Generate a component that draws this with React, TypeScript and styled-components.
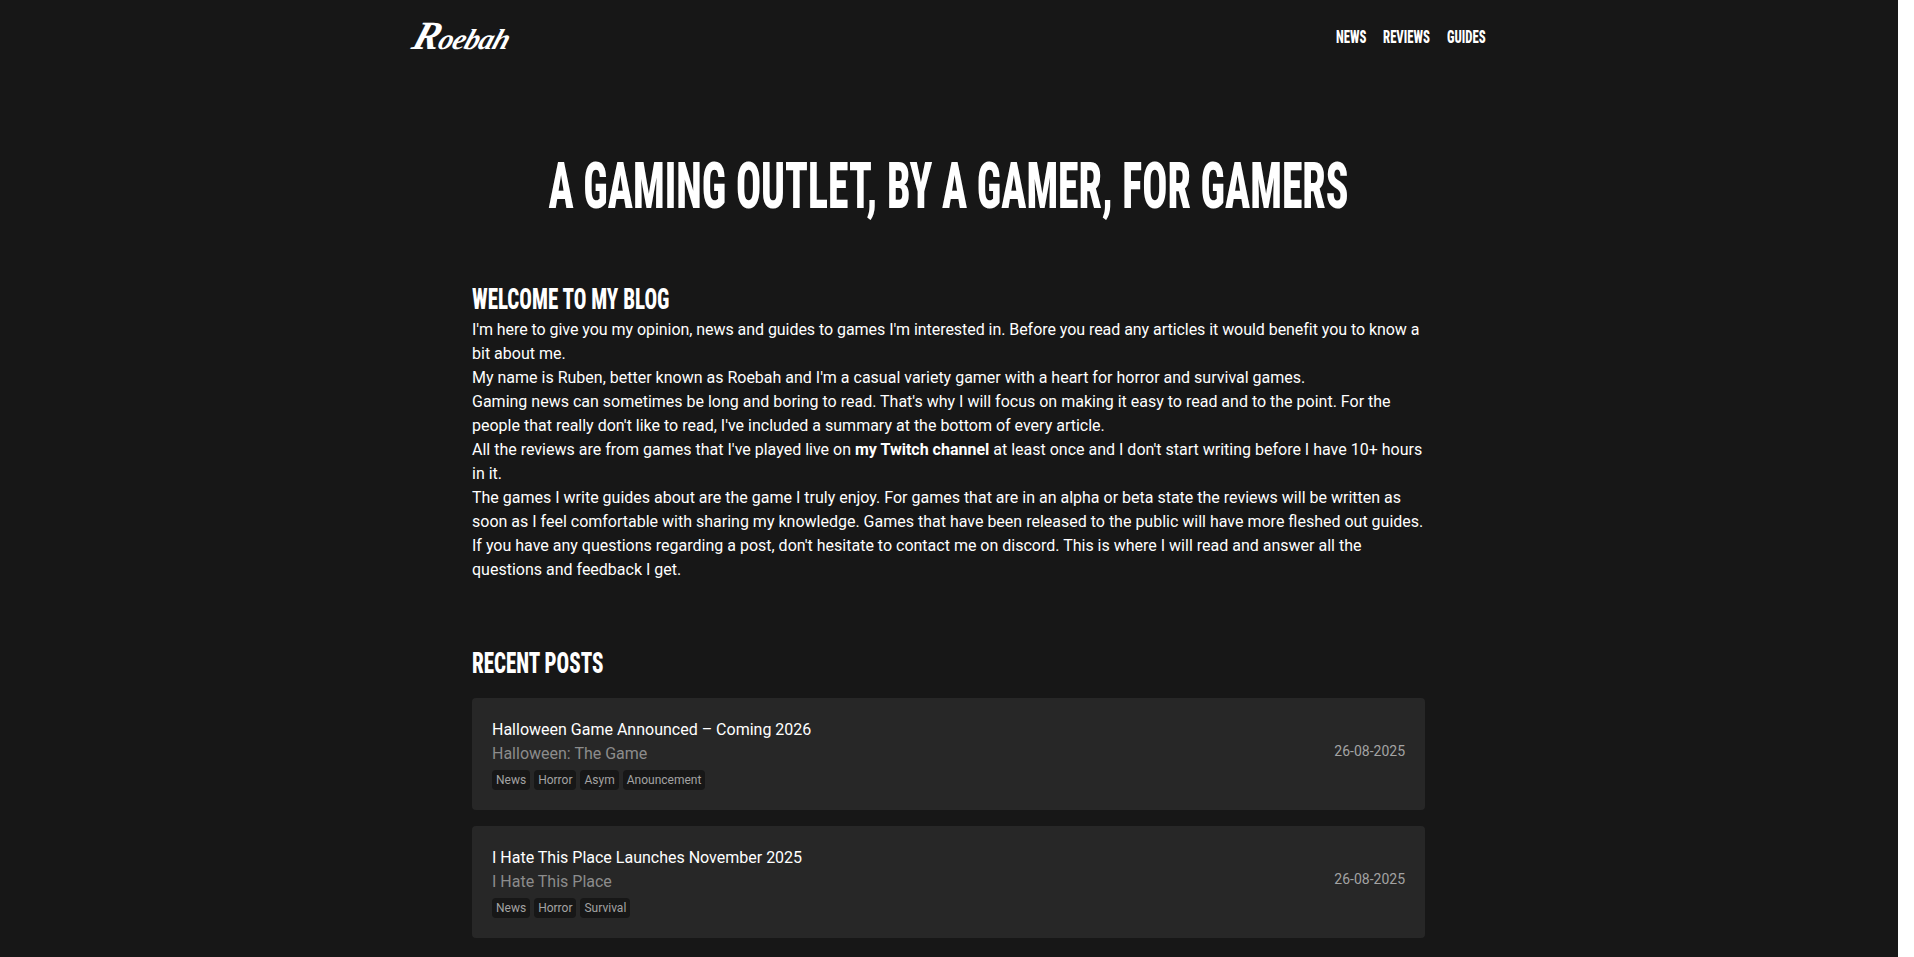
import React from "react";
import styled, { createGlobalStyle, css } from "styled-components";

const posts = [
  {
    title: "Halloween Game Announced – Coming 2026",
    game: "Halloween: The Game",
    tags: ["News", "Horror", "Asym", "Anouncement"],
    date: "26-08-2025",
  },
  {
    title: "I Hate This Place Launches November 2025",
    game: "I Hate This Place",
    tags: ["News", "Horror", "Survival"],
    date: "26-08-2025",
  },
];

const navLinks = [
  { label: "NEWS", width: 31 },
  { label: "REVIEWS", width: 48 },
  { label: "GUIDES", width: 39 },
];

// no Bebas Neue here, so squeeze Roboto's narrowest width down to the same proportions
const displayFont = css`
  font-family: Roboto, "Liberation Sans", sans-serif;
  font-stretch: 75%;
  font-weight: 800;
  white-space: nowrap;
  transform-origin: left center;
`;

const GlobalStyle = createGlobalStyle`
  html, body {
    margin: 0;
    height: 957px;
    overflow: hidden;
    background: #fff;
  }
  body {
    color: #fff;
    font-family: Roboto, "Liberation Sans", sans-serif;
    font-size: 16px;
    line-height: 24px;
  }
`;

const Page = styled.div`
  box-sizing: border-box;
  width: 1898px;
  height: 957px;
  padding-right: 1px;
  overflow: hidden;
  background: #171717;
`;

const Header = styled.header`
  width: 1075px;
  height: 74px;
  margin: 0 auto;
  display: flex;
  align-items: center;
  justify-content: space-between;
`;

const Logo = styled.a`
  display: inline-block;
  margin-left: 3px;
  font-family: "Liberation Serif", serif;
  font-style: italic;
  font-weight: 700;
  font-size: 29px;
  letter-spacing: -0.5px;
  color: #fff;
  transform: skewX(-18deg);

  &::first-letter {
    font-size: 40px;
  }
`;

const Nav = styled.nav`
  display: flex;
  gap: 16px;
`;

const NavLink = styled.a<{ $width: number }>`
  ${displayFont}
  width: ${(p) => p.$width}px;
  font-size: 19px;
  color: #fff;
  transform: scaleX(0.67);
`;

const Hero = styled.h1`
  ${displayFont}
  margin: 81px 0 0;
  font-size: 64px;
  line-height: 64px;
  text-align: center;
  transform: scaleX(0.653);
  transform-origin: center;
`;

const Main = styled.main`
  width: 953px;
  margin: 62px auto 0;
`;

const Heading = styled.h2`
  ${displayFont}
  margin: 0 0 1px;
  font-size: 30px;
  line-height: 36px;
  transform: scaleX(0.7);
`;

const Intro = styled.p`
  margin: 0;
`;

const TightLine = styled.span`
  letter-spacing: -0.05px;
`;

const RecentHeading = styled(Heading)`
  margin-top: 63px;
`;

const PostList = styled.div`
  display: flex;
  flex-direction: column;
  gap: 16px;
  margin-top: 17px;
`;

const Card = styled.article`
  height: 112px;
  padding: 0 20px;
  box-sizing: border-box;
  display: flex;
  align-items: center;
  justify-content: space-between;
  background: #272727;
  border-radius: 4px;
`;

const CardBody = styled.div`
  display: flex;
  flex-direction: column;
`;

const PostTitle = styled.div`
  color: #fff;
`;

const GameName = styled.div`
  color: #8c8c8c;
`;

const Tags = styled.div`
  display: flex;
  gap: 4px;
  margin-top: 4px;
`;

const Tag = styled.span`
  padding: 0 4px;
  font-size: 12px;
  line-height: 20px;
  color: #a3a3a3;
  background: #171717;
  border-radius: 4px;
`;

const PostDate = styled.div`
  padding-bottom: 6px;
  font-size: 14px;
  color: #a3a3a3;
`;

const Strong = styled.strong`
  font-weight: 700;
`;

export default function App() {
  return (
    <Page>
      <GlobalStyle />
      <Header>
        <Logo>Roebah</Logo>
        <Nav>
          {navLinks.map((link) => (
            <NavLink key={link.label} $width={link.width}>
              {link.label}
            </NavLink>
          ))}
        </Nav>
      </Header>
      <Hero>A GAMING OUTLET, BY A GAMER, FOR GAMERS</Hero>
      <Main>
        <Heading>WELCOME TO MY BLOG</Heading>
        <Intro>
          <TightLine>I'm here to give you my opinion, news and guides to games I'm interested in. Before you read any articles it would benefit you to know a</TightLine> bit about me.
          <br />
          My name is Ruben, better known as Roebah and I'm a casual variety gamer with a heart for horror and survival games.
          <br />
          Gaming news can sometimes be long and boring to read. That's why I will focus on making it easy to read and to the point. For the people that really don't like to read, I've included a summary at the bottom of every article.
          <br />
          All the reviews are from games that I've played live on <Strong>my Twitch channel</Strong> at least once and I don't start writing before I have 10+ hours in it.
          <br />
          The games I write guides about are the game I truly enjoy. For games that are in an alpha or beta state the reviews will be written as soon as I feel comfortable with sharing my knowledge. Games that have been released to the public will have more fleshed out guides.
          <br />
          If you have any questions regarding a post, don't hesitate to contact me on discord. This is where I will read and answer all the questions and feedback I get.
        </Intro>
        <RecentHeading>RECENT POSTS</RecentHeading>
        <PostList>
          {posts.map((post) => (
            <Card key={post.title}>
              <CardBody>
                <PostTitle>{post.title}</PostTitle>
                <GameName>{post.game}</GameName>
                <Tags>
                  {post.tags.map((tag) => (
                    <Tag key={tag}>{tag}</Tag>
                  ))}
                </Tags>
              </CardBody>
              <PostDate>{post.date}</PostDate>
            </Card>
          ))}
        </PostList>
      </Main>
    </Page>
  );
}
